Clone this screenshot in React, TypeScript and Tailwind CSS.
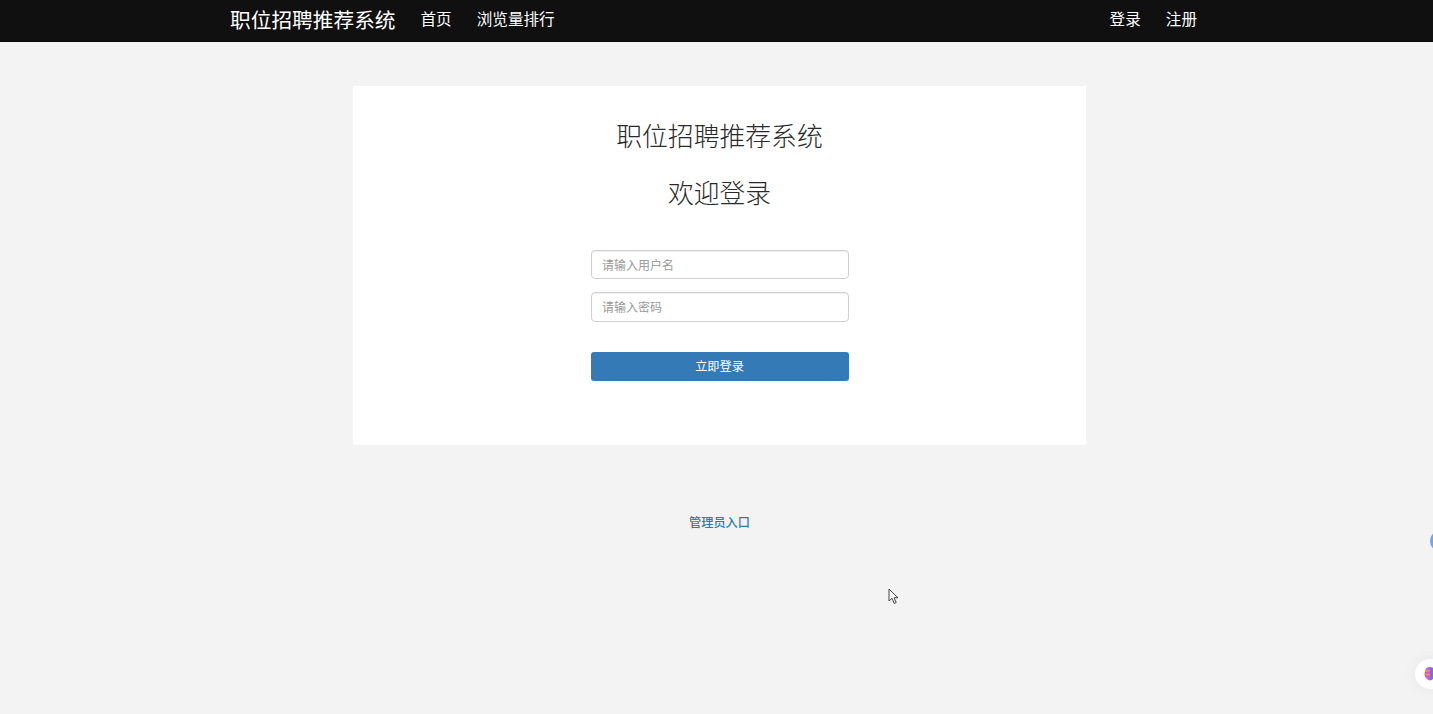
export default function App() {
  return (
    <div className="relative h-[714px] overflow-hidden bg-[#f3f3f3] font-['Noto_Sans_CJK_SC',sans-serif] text-[#333]">
      <nav className="flex h-[42px] items-center justify-between border-b border-[#080808] bg-[#101010] pb-[3px] pl-[230px] pr-[236px] text-white">
        <div className="flex items-center">
          <a className="text-[20.7px] leading-none">职位招聘推荐系统</a>
          <a className="ml-[25px] text-[15.6px] leading-none">首页</a>
          <a className="ml-[25px] text-[15.6px] leading-none">浏览量排行</a>
        </div>
        <div className="flex items-center gap-[25px] text-[15.6px] leading-none">
          <a>登录</a>
          <a>注册</a>
        </div>
      </nav>

      <main className="ml-[353px] mt-[44px] flex h-[359px] w-[733px] flex-col items-center bg-white pt-[31px]">
        <h1 className="text-[25.8px] leading-[36px] font-light text-[#2a2a2a]">职位招聘推荐系统</h1>
        <h2 className="mt-[21px] text-[25.8px] leading-[36px] font-light text-[#2a2a2a]">欢迎登录</h2>
        <form className="mt-[40px] flex w-[258px] flex-col">
          <input
            placeholder="请输入用户名"
            className="h-[29px] w-full rounded-[4px] border border-[#d2d2d2] px-[10.500px] pb-[1px] text-[12px] shadow-[inset_0_1px_1px_rgba(0,0,0,0.075)] outline-none placeholder:text-[#999]"
          />
          <input
            placeholder="请输入密码"
            className="mt-[13px] h-[30px] w-full rounded-[4px] border border-[#d2d2d2] px-[10.500px] pb-[1px] text-[12px] shadow-[inset_0_1px_1px_rgba(0,0,0,0.075)] outline-none placeholder:text-[#999]"
          />
          <button
            type="button"
            className="mt-[30px] h-[29px] w-full rounded-[3px] bg-[#337ab7] pb-[1px] text-[12.200px] text-white"
          >
            立即登录
          </button>
        </form>
      </main>

      <div className="ml-[353px] mt-[68px] w-[733px] text-center text-[12.200px] leading-[18px] font-medium text-[#2f78b4]">
        <a>管理员入口</a>
      </div>

      {/* mouse pointer */}
      <svg className="absolute left-[888px] top-[588px]" width="11" height="17" viewBox="0 0 11 17">
        <path d="M1 1v12l3-2.600L6.200 15.500l2-1L6 9.800h4z" fill="#f8f8f8" stroke="#444" strokeWidth="1" />
      </svg>

      {/* floating widgets clipped at the right edge */}
      <div className="absolute left-[1430px] top-[530px] h-[22px] w-[22px] rounded-full bg-[#6aa5f8]" />
      <div className="absolute left-[1415px] top-[659px] flex h-[30px] w-[30px] items-center rounded-full bg-white pl-[9px] shadow-[0_0_16px_rgba(0,0,0,0.06)]">
        <svg width="12" height="16" viewBox="0 0 12 16">
          <path d="M6 1C3 1 1 3 1 5.500c-1 2-.5 5 1 6.500 1 1.500 3 2.500 4 2.500z" fill="#d65cc8" />
          <path d="M6 1c3 0 5 2 5 4.500 1 2 .5 5-1 6.500-1 1.500-3 2.500-4 2.500z" fill="#7a6cf0" />
          <path d="M1.500 5h4M1.500 8.500h4" stroke="#f59a5c" strokeWidth="1.500" />
        </svg>
      </div>
    </div>
  );
}
